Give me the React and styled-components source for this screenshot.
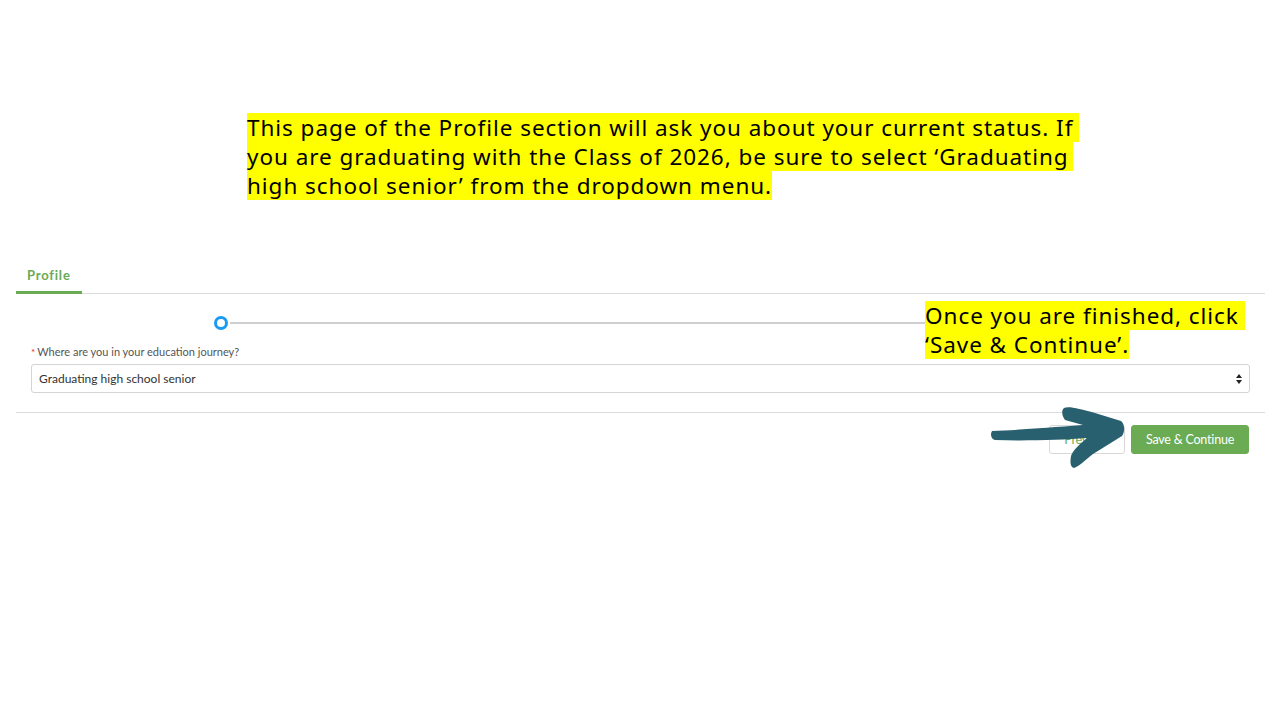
import React from "react";
import styled, { createGlobalStyle } from "styled-components";

const GlobalStyle = createGlobalStyle`
  html, body {
    margin: 0;
    padding: 0;
    background: #ffffff;
  }
  body {
    font-family: Lato, "Liberation Sans", sans-serif;
  }
`;

const GREEN = "#6aab54";

const Slide = styled.div`
  position: relative;
  width: 1280px;
  height: 720px;
  overflow: hidden;
  background: #fff;
`;

const Page = styled.div`
  padding: 262px 15px 0 16px;
`;

const Tabs = styled.div`
  display: flex;
  border-bottom: 1px solid #dcdcdc;
`;

const Tab = styled.div`
  padding: 5px 11px 8px;
  font-size: 13px;
  font-weight: 700;
  letter-spacing: 0.8px;
  color: ${GREEN};
  border-bottom: 3px solid ${GREEN};
  margin-bottom: -1px;
`;

const Stepper = styled.div`
  display: flex;
  align-items: center;
  height: 30px;
  margin-top: 14px;
  padding-left: 198px;
  padding-right: 260px;
`;

const StepDot = styled.div`
  width: 8px;
  height: 8px;
  border-radius: 50%;
  border: 3.5px solid #1a9af0;
  background: #fff;
  flex: none;
`;

const StepLine = styled.div`
  flex: 1;
  height: 2px;
  background: #cfcfcf;
  margin-left: 2px;
`;

const Field = styled.div`
  padding: 0 15px;
`;

const Label = styled.div`
  margin-top: 7px;
  font-size: 11px;
  color: #555;
  display: flex;
  align-items: baseline;
  gap: 2px;
`;

const Required = styled.span`
  color: #e0282e;
  font-size: 10px;
`;

const Select = styled.div`
  margin-top: 6px;
  height: 27px;
  border: 1px solid #d4d4d4;
  border-radius: 3px;
  display: flex;
  align-items: center;
  justify-content: space-between;
  padding: 0 7px 0 7px;
  font-size: 12px;
  color: #333;
`;

const Spinner = styled.div`
  display: flex;
  flex-direction: column;
  align-items: center;
  gap: 2px;
`;

const Caret = styled.div`
  width: 0;
  height: 0;
  border-left: 3px solid transparent;
  border-right: 3px solid transparent;
  ${(p) =>
    p.$up
      ? "border-bottom: 4px solid #222;"
      : "border-top: 4px solid #222;"}
`;

const Divider = styled.div`
  margin-top: 19px;
  border-top: 1px solid #dcdcdc;
`;

const Actions = styled.div`
  display: flex;
  justify-content: flex-end;
  gap: 6px;
  padding: 12px 16px 0 0;
`;

const Button = styled.div`
  height: 29px;
  box-sizing: border-box;
  display: flex;
  align-items: center;
  justify-content: center;
  white-space: nowrap;
  border-radius: 3px;
  font-size: 12.5px;
  letter-spacing: -0.2px;
  width: ${(p) => (p.$primary ? "118px" : "76px")};
  background: ${(p) => (p.$primary ? GREEN : "#fff")};
  color: ${(p) => (p.$primary ? "#fff" : GREEN)};
  border: 1px solid ${(p) => (p.$primary ? GREEN : "#d8d8d8")};
`;

const Note = styled.div`
  position: absolute;
  left: ${(p) => p.$x}px;
  top: ${(p) => p.$y}px;
  font-family: "Noto Sans", sans-serif;
  font-size: 22.5px;
  letter-spacing: 0.95px;
  line-height: 29px;
  color: #000;
  display: flex;
  flex-direction: column;
  align-items: flex-start;
`;

const Mark = styled.span`
  background: #ffff00;
  padding-right: ${(p) => p.$pad || 0}px;
  white-space: nowrap;
`;

const Arrow = styled.svg`
  position: absolute;
  left: 985px;
  top: 400px;
`;

export default function App() {
  return (
    <Slide>
      <GlobalStyle />
      <Page>
        <Tabs>
          <Tab>Profile</Tab>
        </Tabs>
        <Stepper>
          <StepDot />
          <StepLine />
        </Stepper>
        <Field>
          <Label>
            <Required>*</Required>
            Where are you in your education journey?
          </Label>
          <Select>
            Graduating high school senior
            <Spinner>
              <Caret $up />
              <Caret />
            </Spinner>
          </Select>
        </Field>
        <Divider />
        <Actions>
          <Button>Previous</Button>
          <Button $primary>Save &amp; Continue</Button>
        </Actions>
      </Page>

      <Note $x={247} $y={113}>
        <Mark $pad={6}>
          This page of the Profile section will ask you about your current status. If
        </Mark>
        <Mark $pad={4}>
          you are graduating with the Class of 2026, be sure to select ‘Graduating
        </Mark>
        <Mark>high school senior’ from the dropdown menu.</Mark>
      </Note>

      <Note $x={925} $y={301}>
        <Mark $pad={6}>Once you are finished, click</Mark>
        <Mark>‘Save &amp; Continue’.</Mark>
      </Note>

      <Arrow width="150" height="75" viewBox="0 0 150 75">
        <path
          d="M7 31 C 30 30, 60 28, 98 25 L 80 20 C 77 16, 76 11, 79 8 C 84 6, 95 9, 110 13 L 136 21 C 140 24, 140 32, 137 36 L 108 54 C 100 60, 95 66, 89 68 C 85 67, 85 62, 86 56 C 88 50, 95 44, 102 38 C 75 40, 40 41, 10 40 C 6 39, 5 34, 7 31 Z"
          fill="#29606f"
        />
      </Arrow>
    </Slide>
  );
}
